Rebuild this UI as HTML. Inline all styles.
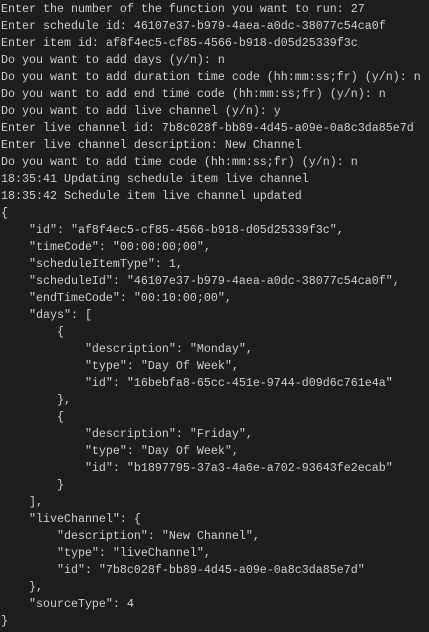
<!DOCTYPE html>
<html><head><meta charset="utf-8"><style>
html,body{margin:0;padding:0;background:#1e1e1e;width:429px;height:632px;overflow:hidden}
pre{margin:0;padding:1px 0 0 1px;font-family:"Liberation Mono",monospace;font-size:11.67px;line-height:17px;color:#cccccc;white-space:pre}
</style></head><body><pre>Enter the number of the function you want to run: 27
Enter schedule id: 46107e37-b979-4aea-a0dc-38077c54ca0f
Enter item id: af8f4ec5-cf85-4566-b918-d05d25339f3c
Do you want to add days (y/n): n
Do you want to add duration time code (hh:mm:ss;fr) (y/n): n
Do you want to add end time code (hh:mm:ss;fr) (y/n): n
Do you want to add live channel (y/n): y
Enter live channel id: 7b8c028f-bb89-4d45-a09e-0a8c3da85e7d
Enter live channel description: New Channel
Do you want to add time code (hh:mm:ss;fr) (y/n): n
18:35:41 Updating schedule item live channel
18:35:42 Schedule item live channel updated
{
    "id": "af8f4ec5-cf85-4566-b918-d05d25339f3c",
    "timeCode": "00:00:00;00",
    "scheduleItemType": 1,
    "scheduleId": "46107e37-b979-4aea-a0dc-38077c54ca0f",
    "endTimeCode": "00:10:00;00",
    "days": [
        {
            "description": "Monday",
            "type": "Day Of Week",
            "id": "16bebfa8-65cc-451e-9744-d09d6c761e4a"
        },
        {
            "description": "Friday",
            "type": "Day Of Week",
            "id": "b1897795-37a3-4a6e-a702-93643fe2ecab"
        }
    ],
    "liveChannel": {
        "description": "New Channel",
        "type": "liveChannel",
        "id": "7b8c028f-bb89-4d45-a09e-0a8c3da85e7d"
    },
    "sourceType": 4
}</pre></body></html>
